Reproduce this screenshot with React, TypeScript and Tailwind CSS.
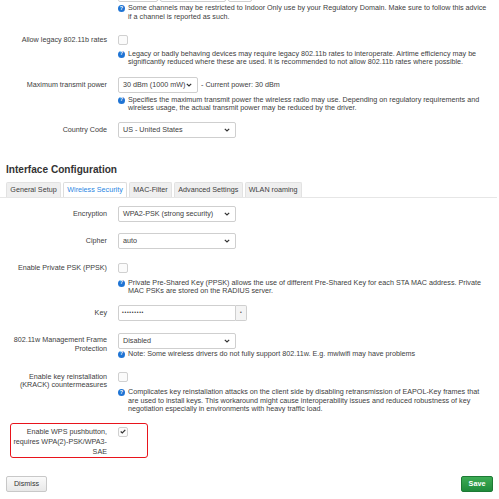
import React from "react";

const Info = () => (
  <span className="mr-[3px] mt-[1px] flex h-[7px] w-[7px] shrink-0 items-center justify-center rounded-full bg-[#1f74d4] text-[5.5px] font-bold leading-none text-white">
    ?
  </span>
);

const Help = ({ lines, className = "" }: { lines: string[]; className?: string }) => (
  <div className={"flex text-[7.2px] leading-[8.7px] text-[#404040] " + className}>
    <Info />
    <div>
      {lines.map((l) => (
        <div key={l} className="whitespace-nowrap">
          {l}
        </div>
      ))}
    </div>
  </div>
);

const Chevron = () => (
  <svg width="6" height="4" viewBox="0 0 6 4" className="shrink-0">
    <polyline points="0.8,0.8 3,3 5.2,0.8" fill="none" stroke="#333" strokeWidth="1.2" />
  </svg>
);

const Select = ({ value, w }: { value: string; w: string }) => (
  <div
    className={
      "flex h-[16px] items-center justify-between rounded-[2px] border border-[#cfcfcf] bg-white pl-[4px] pr-[5px] text-[7.2px] text-[#404040] " +
      w
    }
  >
    <span className="whitespace-nowrap">{value}</span>
    <Chevron />
  </div>
);

const Checkbox = ({ checked = false }: { checked?: boolean }) => (
  <div className="flex h-[10px] w-[10px] items-center justify-center rounded-[2px] border border-[#d0d0d0] bg-[#fbfbfb]">
    {checked && (
      <svg width="6" height="5" viewBox="0 0 6 5">
        <polyline points="0.7,2.5 2.3,4 5.3,0.8" fill="none" stroke="#333" strokeWidth="1.2" />
      </svg>
    )}
  </div>
);

const Label = ({ children, pt }: { children: React.ReactNode; pt: string }) => (
  <div className={"ml-[9px] w-[98px] shrink-0 text-right text-[7.2px] leading-[8.7px] text-[#404040] " + pt}>
    {children}
  </div>
);

const tabs = ["General Setup", "Wireless Security", "MAC-Filter", "Advanced Settings", "WLAN roaming"];

export default function App() {
  return (
    <div className="h-[499px] w-[499px] overflow-hidden bg-white font-['Liberation_Sans',Arial,sans-serif] text-[#404040]">
      {/* channel selects above, cut off */}
      <div className="ml-[118px] mt-[-14px] flex gap-[2px]">
        <div className="h-[16px] w-[40px] rounded-[2px] border border-[#cfcfcf]" />
        <div className="h-[16px] w-[66px] rounded-[2px] border border-[#cfcfcf]" />
        <div className="h-[16px] w-[24px] rounded-[2px] border border-[#cfcfcf]" />
      </div>
      <Help
        className="ml-[118px] mt-[2px]"
        lines={[
          "Some channels may be restricted to Indoor Only use by your Regulatory Domain. Make sure to follow this advice",
          "if a channel is reported as such.",
        ]}
      />

      <div className="mt-[13.6px] flex">
        <Label pt="pt-[0.7px]">Allow legacy 802.11b rates</Label>
        <div className="ml-[11px]">
          <Checkbox />
        </div>
      </div>
      <Help
        className="ml-[118px] mt-[4.6px]"
        lines={[
          "Legacy or badly behaving devices may require legacy 802.11b rates to interoperate. Airtime efficiency may be",
          "significantly reduced where these are used. It is recommended to not allow 802.11b rates where possible.",
        ]}
      />

      <div className="mt-[10px] flex">
        <Label pt="pt-[3.6px]">Maximum transmit power</Label>
        <div className="ml-[11px] flex items-center">
          <Select value="30 dBm (1000 mW)" w="w-[80px]" />
          <span className="ml-[3px] text-[7.2px]">- Current power: 30 dBm</span>
        </div>
      </div>
      <Help
        className="ml-[118px] mt-[2.6px]"
        lines={[
          "Specifies the maximum transmit power the wireless radio may use. Depending on regulatory requirements and",
          "wireless usage, the actual transmit power may be reduced by the driver.",
        ]}
      />

      <div className="mt-[9px] flex">
        <Label pt="pt-[3.6px]">Country Code</Label>
        <div className="ml-[11px]">
          <Select value="US - United States" w="w-[118px]" />
        </div>
      </div>

      <h2 className="ml-[6px] mt-[26px] text-[10.1px] font-bold leading-[12px] text-[#333]">Interface Configuration</h2>

      <div className="mr-[2px] mt-[6px] flex gap-[2px] border-b-[1.5px] border-[#e6e6e6] pl-[6px]">
        {tabs.map((t) => {
          const active = t === "Wireless Security";
          return (
            <div
              key={t}
              className={
                "flex h-[15px] items-center whitespace-nowrap rounded-t-[2px] border border-b-0 px-[3.3px] text-[7.2px] " +
                (active ? "border-[#ddd] bg-white text-[#2b86e3]" : "border-[#e2e2e2] bg-[#efefef] text-[#404040]")
              }
            >
              {t}
            </div>
          );
        })}
      </div>

      <div className="mt-[8px] flex">
        <Label pt="pt-[3.6px]">Encryption</Label>
        <div className="ml-[11px]">
          <Select value="WPA2-PSK (strong security)" w="w-[118px]" />
        </div>
      </div>

      <div className="mt-[11px] flex">
        <Label pt="pt-[3.6px]">Cipher</Label>
        <div className="ml-[11px]">
          <Select value="auto" w="w-[118px]" />
        </div>
      </div>

      <div className="mt-[14px] flex">
        <Label pt="pt-[0.7px]">Enable Private PSK (PPSK)</Label>
        <div className="ml-[11px]">
          <Checkbox />
        </div>
      </div>
      <Help
        className="ml-[118px] mt-[5.6px]"
        lines={[
          "Private Pre-Shared Key (PPSK) allows the use of different Pre-Shared Key for each STA MAC address. Private",
          "MAC PSKs are stored on the RADIUS server.",
        ]}
      />

      <div className="mt-[9px] flex">
        <Label pt="pt-[3.6px]">Key</Label>
        <div className="ml-[11px] flex">
          <div className="flex h-[16px] w-[118px] items-center rounded-l-[2px] border border-[#cfcfcf] bg-white pl-[3px] text-[5px] tracking-[0.7px] text-[#333]">
            •••••••••
          </div>
          <div className="flex h-[16px] w-[11px] items-center justify-center rounded-r-[2px] border border-l-0 border-[#cfcfcf] bg-[#f4f4f4] text-[5px] text-[#555]">
            •
          </div>
        </div>
      </div>

      <div className="mt-[12px] flex">
        <Label pt="pt-[3.2px]">802.11w Management Frame Protection</Label>
        <div className="ml-[11px]">
          <Select value="Disabled" w="w-[118px]" />
          <Help className="mt-[0.6px]" lines={["Note: Some wireless drivers do not fully support 802.11w. E.g. mwlwifi may have problems"]} />
        </div>
      </div>

      <div className="mt-[13.7px] flex">
        <Label pt="pt-[0.7px]">Enable key reinstallation (KRACK) countermeasures</Label>
        <div className="ml-[11px]">
          <Checkbox />
          <Help
            className="mt-[6px]"
            lines={[
              "Complicates key reinstallation attacks on the client side by disabling retransmission of EAPOL-Key frames that",
              "are used to install keys. This workaround might cause interoperability issues and reduced robustness of key",
              "negotiation especially in environments with heavy traffic load.",
            ]}
          />
        </div>
      </div>

      <div className="ml-[10px] mt-[9px] flex h-[35px] w-[138px] rounded-[3px] border-[1.5px] border-[#e8141c]">
        <div className="w-[96px] shrink-0 pt-[3px] text-right text-[7.2px] leading-[9.8px] text-[#404040]">
          Enable WPS pushbutton, requires WPA(2)-PSK/WPA3-SAE
        </div>
        <div className="ml-[10.5px] mt-[2.5px]">
          <Checkbox checked />
        </div>
      </div>

      <div className="mx-[6px] mt-[18px] flex justify-between">
        <div className="flex h-[16px] w-[41px] items-center justify-center rounded-[2px] border border-[#c8c8c8] bg-gradient-to-b from-[#fafafa] to-[#e8e8e8] text-[7.2px] text-[#333]">
          Dismiss
        </div>
        <div className="flex h-[16px] w-[32px] items-center justify-center rounded-[2px] border border-[#1d7a35] bg-gradient-to-b from-[#3dac55] to-[#1f8b3c] text-[7.2px] font-bold text-white">
          Save
        </div>
      </div>
    </div>
  );
}
